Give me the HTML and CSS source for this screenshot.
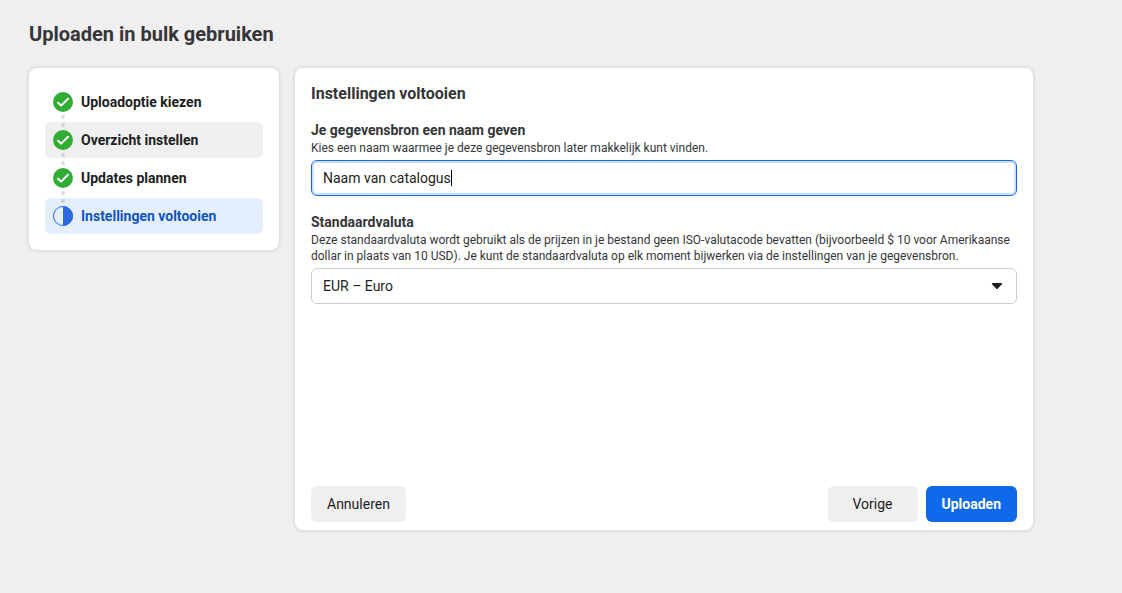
FILE: index.html
```html
<!DOCTYPE html>
<html lang="nl">
<head>
<meta charset="utf-8">
<meta name="viewport" content="width=device-width, initial-scale=1">
<title>Uploaden in bulk gebruiken</title>
<link rel="stylesheet" href="styles.css">
</head>
<body>
<div class="page">
  <h1 class="page-title">Uploaden in bulk gebruiken</h1>
  <div class="layout">
    <nav class="card steps" aria-label="Stappen">
      <ol class="step-list">
        <li class="step">
          <a class="step-link" href="#opties">
            <svg class="step-icon" viewBox="0 0 20 20" aria-hidden="true"><circle cx="10" cy="10" r="10" fill="#31ad35"/><path d="M5 10.7l3.1 2.9 7-6.8" fill="none" stroke="#fff" stroke-width="2" stroke-linecap="round" stroke-linejoin="round"/></svg>
            <span>Uploadoptie kiezen</span>
          </a>
        </li>
        <li class="step">
          <a class="step-link step-link-hover" href="#overzicht">
            <svg class="step-icon" viewBox="0 0 20 20" aria-hidden="true"><circle cx="10" cy="10" r="10" fill="#31ad35"/><path d="M5 10.7l3.1 2.9 7-6.8" fill="none" stroke="#fff" stroke-width="2" stroke-linecap="round" stroke-linejoin="round"/></svg>
            <span>Overzicht instellen</span>
          </a>
        </li>
        <li class="step">
          <a class="step-link" href="#updates">
            <svg class="step-icon" viewBox="0 0 20 20" aria-hidden="true"><circle cx="10" cy="10" r="10" fill="#31ad35"/><path d="M5 10.7l3.1 2.9 7-6.8" fill="none" stroke="#fff" stroke-width="2" stroke-linecap="round" stroke-linejoin="round"/></svg>
            <span>Updates plannen</span>
          </a>
        </li>
        <li class="step">
          <a class="step-link step-link-current" href="#instellingen" aria-current="step">
            <svg class="step-icon" viewBox="0 0 20 20" aria-hidden="true"><circle cx="10" cy="10" r="9.5" fill="none" stroke="#2d6ae0"/><path d="M10 0a10 10 0 0 1 0 20z" fill="#2d6ae0"/></svg>
            <span>Instellingen voltooien</span>
          </a>
        </li>
      </ol>
    </nav>
    <main class="card panel">
      <h2 class="panel-title">Instellingen voltooien</h2>
      <form class="form">
        <div class="field">
          <label class="field-label" for="source-name">Je gegevensbron een naam geven</label>
          <p class="field-help" id="name-help">Kies een naam waarmee je deze gegevensbron later makkelijk kunt vinden.</p>
          <div class="text-box">
            <input class="text-input" id="source-name" type="text" value="Naam van catalogus" aria-describedby="name-help">
            <span class="caret" aria-hidden="true"></span>
          </div>
        </div>
        <div class="field">
          <label class="field-label" for="currency">Standaardvaluta</label>
          <p class="field-help" id="currency-help">Deze standaardvaluta wordt gebruikt als de prijzen in je bestand geen ISO-valutacode bevatten (bijvoorbeeld $ 10 voor Amerikaanse dollar in plaats van 10 USD). Je kunt de standaardvaluta op elk moment bijwerken via de instellingen van je gegevensbron.</p>
          <div class="select-box">
            <select class="select" id="currency" aria-describedby="currency-help">
              <option>EUR – Euro</option>
            </select>
            <svg class="select-arrow" viewBox="0 0 12 8" aria-hidden="true"><path d="M1.5 1h9a.7.7 0 0 1 .5 1.2L6.9 6.6a1.2 1.2 0 0 1-1.8 0L1 2.2A.7.7 0 0 1 1.500 1z" fill="#1c1e21"/></svg>
          </div>
        </div>
        <div class="actions">
          <button class="button" type="button">Annuleren</button>
          <div class="actions-end">
            <button class="button button-wide" type="button">Vorige</button>
            <button class="button button-primary" type="submit">Uploaden</button>
          </div>
        </div>
      </form>
    </main>
  </div>
</div>
</body>
</html>
```
FILE: styles.css
```css
* {
  box-sizing: border-box;
}

body {
  margin: 0;
  background: #efefef;
  color: #1c1e21;
  font-family: Roboto, "Liberation Sans", sans-serif;
  font-size: 14px;
  line-height: 20px;
}

.page {
  max-width: 1062px;
  padding: 22px 29px;
}

.page-title {
  margin: 0 0 22px;
  color: #343638;
  font-size: 20px;
  line-height: 24px;
}

.layout {
  display: flex;
  align-items: flex-start;
  gap: 16px;
}

.card {
  border-radius: 8px;
  background: #fff;
  box-shadow: 0 0 4px rgba(0, 0, 0, 0.16);
}

.steps {
  flex: 0 0 250px;
  padding: 16px;
}

.step-list {
  display: flex;
  flex-direction: column;
  gap: 2px;
  margin: 0;
  padding: 0;
  list-style: none;
}

.step {
  position: relative;
}

.step + .step::before {
  content: "";
  position: absolute;
  top: -7px;
  left: 16px;
  width: 4px;
  height: 4px;
  border-radius: 50%;
  background: rgba(0, 0, 0, 0.13);
  box-shadow: 0 8px 0 rgba(0, 0, 0, 0.13);
}

.step-link {
  display: flex;
  align-items: center;
  gap: 8px;
  padding: 8px;
  border-radius: 6px;
  color: #1c1e21;
  font-weight: 700;
  text-decoration: none;
}

.step-link-hover {
  background: #efefef;
}

.step-link-current {
  background: #e3effd;
  color: #0f53c0;
}

.step-icon {
  flex: none;
  width: 20px;
  height: 20px;
}

.panel {
  display: flex;
  flex: 1;
  flex-direction: column;
  min-height: 462px;
  padding: 16px 16px 8px;
}

.panel-title {
  margin: 0 0 16px;
  color: #343638;
  font-size: 16px;
  line-height: 20px;
}

.form {
  display: flex;
  flex: 1;
  flex-direction: column;
  gap: 16px;
}

.field-label {
  display: block;
  color: #343638;
  font-weight: 700;
}

.field-help {
  margin: 0 0 4px;
  color: #343638;
  font-size: 12px;
  line-height: 16px;
}

.text-box,
.select-box {
  display: flex;
  align-items: center;
  height: 36px;
  border: 1px solid #ccc;
  border-radius: 6px;
  background: #fff;
}

.text-box {
  padding: 0 11px;
  border-color: #1469eb;
  box-shadow: inset 0 0 0 2px #cce0fb;
}

.text-input {
  field-sizing: content;
  max-width: 100%;
  padding: 0;
  border: 0;
  outline: 0;
  background: none;
  color: inherit;
  font: inherit;
  caret-color: transparent;
}

.caret {
  width: 1px;
  height: 16px;
  background: #000;
}

.select-box {
  display: grid;
}

.select,
.select-arrow {
  grid-area: 1 / 1;
}

.select {
  width: 100%;
  height: 100%;
  padding: 0 36px 0 11px;
  border: 0;
  border-radius: 6px;
  appearance: none;
  background: none;
  color: inherit;
  font: inherit;
}

.select-arrow {
  justify-self: end;
  width: 12px;
  height: 8px;
  margin-right: 13px;
  pointer-events: none;
}

.actions,
.actions-end {
  display: flex;
  justify-content: space-between;
  gap: 8px;
}

.actions {
  margin-top: auto;
}

.button {
  height: 36px;
  padding: 0 16px;
  border: 0;
  border-radius: 6px;
  background: #efefef;
  color: #1c1e21;
  font: inherit;
}

.button-wide {
  min-width: 90px;
}

.button-primary {
  background: #0f69ec;
  color: #fff;
  font-weight: 700;
}
```
